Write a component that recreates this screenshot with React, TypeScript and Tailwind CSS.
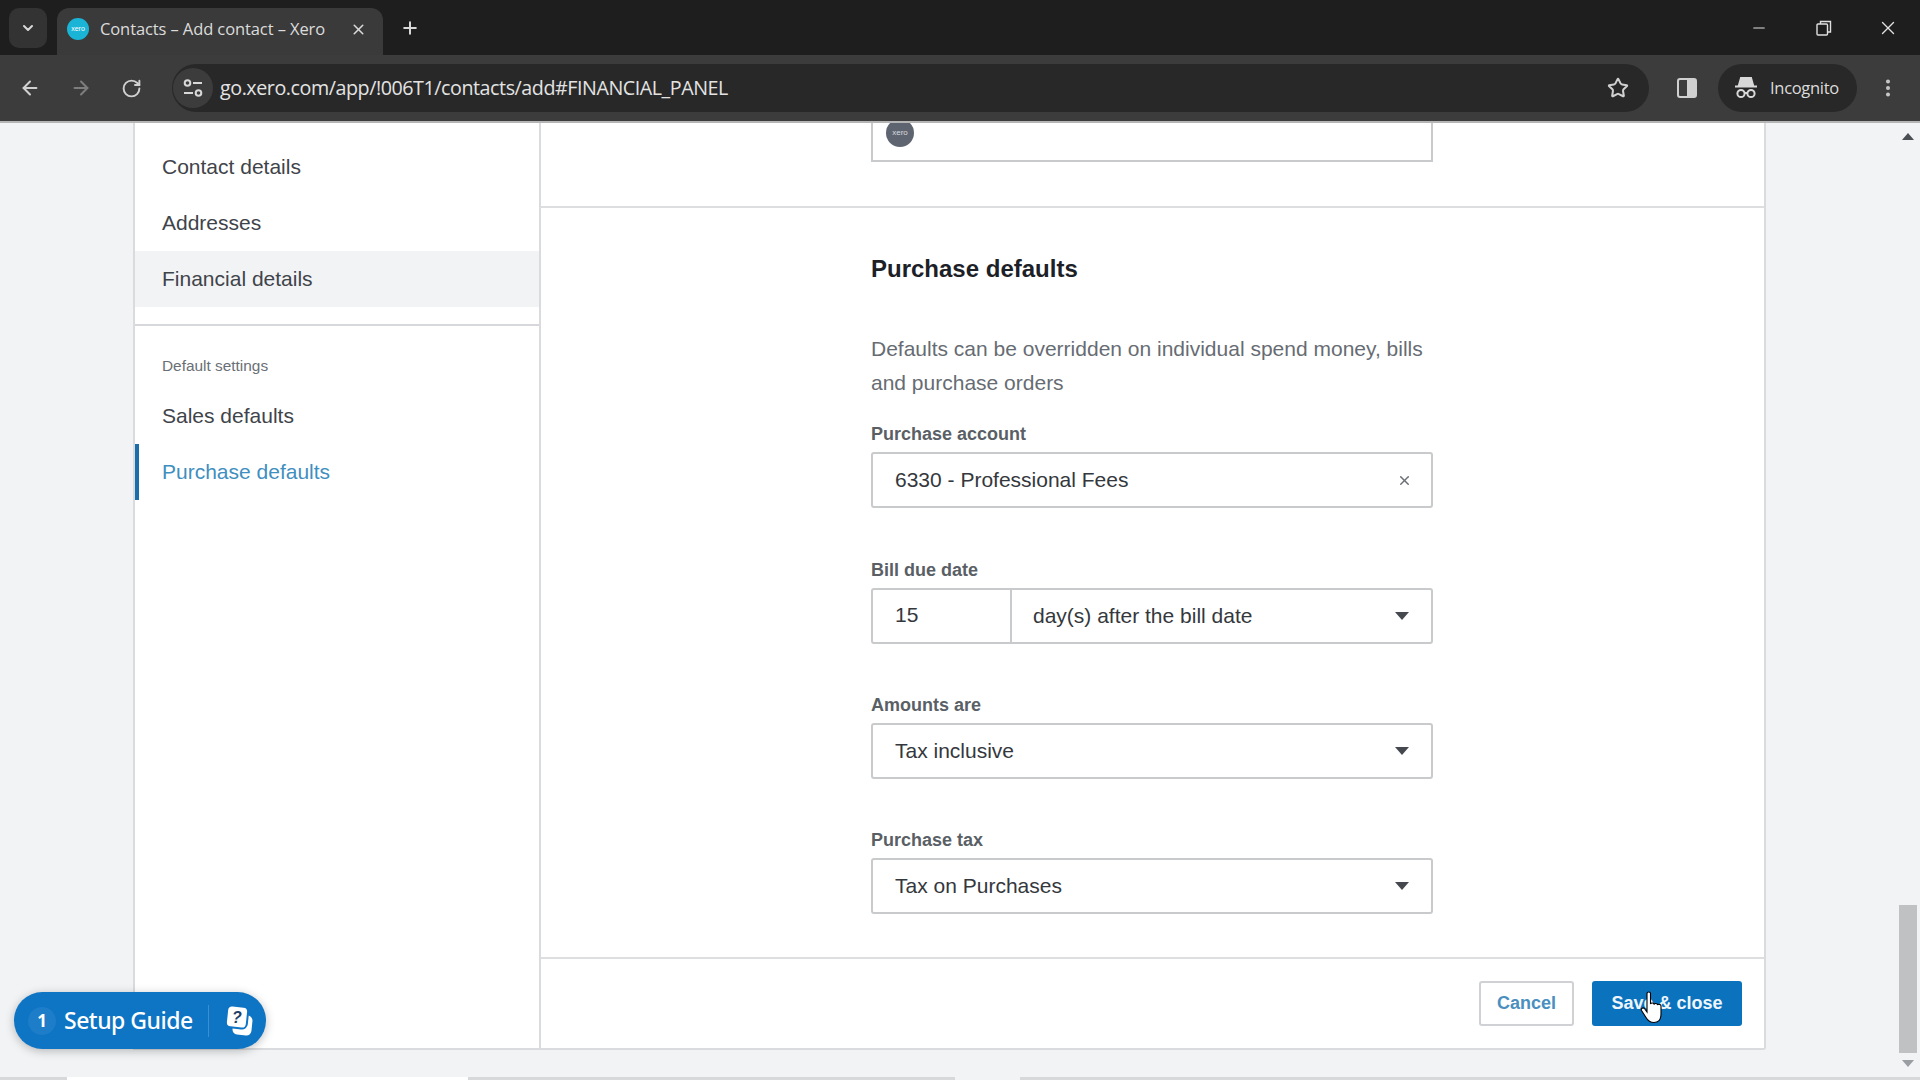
import React from 'react';
import { ArrowLeft, ArrowRight, RotateCw, Star, X, Plus, ChevronDown, Minus, MoreVertical } from 'lucide-react';

const sans = 'font-["Liberation_Sans",Arial,sans-serif]';

const Caret = () => (
  <svg width="14" height="8" viewBox="0 0 14 8" className="shrink-0">
    <path d="M0 0h14L7 8z" fill="#45494f" />
  </svg>
);

const Field: React.FC<{ label: string; value: string; className?: string }> = ({ label, value, className }) => (
  <div className={className}>
    <div className="h-[18px] text-[18px] leading-[18px] font-bold text-[#5a5f66] whitespace-nowrap">{label}</div>
    <div className="mt-[9px] h-[56px] border-2 border-[#c8cacc] rounded-[3px] flex items-center justify-between pl-[22px] pr-[22px] text-[21px] text-[#34383d]">
      <span>{value}</span>
      <Caret />
    </div>
  </div>
);

const TuneIcon = () => (
  <svg width="20" height="18" viewBox="0 0 20 18" fill="none" stroke="#d8d8d8" strokeWidth="2">
    <circle cx="4.500" cy="4" r="2.800" />
    <path d="M10 4h9" />
    <path d="M1 14h9" />
    <circle cx="15.500" cy="14" r="2.800" />
  </svg>
);

const IncognitoIcon = () => (
  <svg width="22" height="24" viewBox="0 0 22 24" fill="none" stroke="#d8d8d8" strokeWidth="2">
    <path d="M6 2h10l2 7H4z" fill="#d8d8d8" />
    <path d="M0 10.500h22" />
    <circle cx="6" cy="17.500" r="3.600" />
    <circle cx="16" cy="17.500" r="3.600" />
    <path d="M9.600 17h2.800" />
  </svg>
);

const HelpIcon = () => (
  <svg width="30" height="32" viewBox="0 0 30 32">
    <rect x="9" y="10" width="19" height="20" rx="5" fill="#fff" transform="rotate(6 18 20)" />
    <rect x="2.500" y="1" width="21" height="22" rx="5" fill="#fff" stroke="#0e74c4" strokeWidth="2" transform="rotate(6 13 12)" />
    <text x="13" y="18" fontSize="16" fontWeight="700" fontStyle="italic" fill="#1f3f66" textAnchor="middle" fontFamily="Liberation Sans">?</text>
  </svg>
);

const Cursor = () => (
  <svg width="26" height="34" viewBox="0 0 26 34">
    <path d="M7 2.500c0-2 3.500-2 3.500 0V13c.5-1.500 3.500-1.500 3.500.5.500-1.500 3.500-1.500 3.500.5.500-1 3.500-1 3.500 1v8c0 5-2 8.500-7 8.500-4 0-6-1.500-8-5l-4.500-7c-1-2 1.500-3.500 3-2L7 21z" fill="#fff" stroke="#000" strokeWidth="1.100" />
  </svg>
);

const App: React.FC = () => {
  return (
    <div className={`w-[1920px] h-[1080px] overflow-hidden relative flex flex-col bg-[#f1f3f4] ${sans}`}>
      {/* browser chrome */}
      <div className="h-[55px] bg-[#1e1e1e] flex items-end pl-[9px] shrink-0">
        <div className="w-[38px] h-[40px] mb-[7px] rounded-[10px] bg-[#333333] flex items-center justify-center">
          <ChevronDown size={16} strokeWidth={3} color="#d8d8d8" />
        </div>
        <div className="ml-[10px] w-[326px] h-[47px] bg-[#3a3a3a] rounded-t-[12px] flex items-center pl-[10px] pb-[5px]">
          <div className="w-[22px] h-[22px] rounded-full bg-[#1ab4d7] flex items-center justify-center text-[7px] text-white">xero</div>
          <span className="ml-[11px] w-[226px] text-[16.5px] text-[#dcdcdc] font-['Open_Sans',sans-serif] tracking-[-0.1px] whitespace-nowrap">Contacts – Add contact – Xero</span>
          <X size={17} strokeWidth={2.2} color="#d8d8d8" className="ml-[24px]" />
        </div>
        <div className="ml-[17px] mb-[17px]">
          <Plus size={20} strokeWidth={2.4} color="#d8d8d8" />
        </div>
        <div className="flex-1" />
        <div className="flex items-center mb-[16px]">
          <Minus size={18} strokeWidth={1.5} color="#e0e0e0" className="mr-[48px]" />
          <svg width="16" height="16" viewBox="0 0 16 16" fill="none" stroke="#e0e0e0" strokeWidth="1.400" className="mr-[45px]">
            <rect x="1" y="4" width="10.500" height="11" rx="1" />
            <path d="M4.500 4V1.500h10v10.500H11.500" />
          </svg>
          <X size={22} strokeWidth={1.5} color="#e0e0e0" className="mr-[21px]" />
        </div>
      </div>
      <div className="h-[68px] bg-[#3c3c3c] border-b-2 border-[#b5b5b5] flex items-center shrink-0">
        <ArrowLeft size={22} strokeWidth={2.2} color="#d0d0d0" className="ml-[19px]" />
        <ArrowRight size={22} strokeWidth={2.2} color="#7d7d7d" className="ml-[29px]" />
        <RotateCw size={21} strokeWidth={2.2} color="#d0d0d0" className="ml-[29px]" />
        <div className="ml-[30px] w-[1477px] h-[48px] rounded-full bg-[#282828] flex items-center">
          <div className="w-[40px] h-[40px] ml-[1px] rounded-full bg-[#3c3c3c] flex items-center justify-center">
            <TuneIcon />
          </div>
          <span className="ml-[7px] text-[19.7px] text-[#e3e3e3] font-['Open_Sans',sans-serif] tracking-[-0.45px]">go.xero.com/app/!006T1/contacts/add#FINANCIAL_PANEL</span>
          <div className="flex-1" />
          <Star size={22} strokeWidth={2.2} color="#d0d0d0" className="mr-[20px]" />
        </div>
        <svg width="20" height="20" viewBox="0 0 20 20" className="ml-[28px]">
          <rect x="1" y="1" width="18" height="18" rx="2" fill="none" stroke="#d0d0d0" strokeWidth="2" />
          <rect x="10" y="1" width="9" height="18" fill="#d0d0d0" />
        </svg>
        <div className="ml-[21px] w-[139px] h-[48px] rounded-full bg-[#282828] flex items-center pl-[17px]">
          <IncognitoIcon />
          <span className="ml-[13px] text-[16.5px] text-[#dcdcdc] font-['Open_Sans',sans-serif] tracking-[-0.3px]">Incognito</span>
        </div>
        <MoreVertical size={22} strokeWidth={2.4} color="#c8c8c8" className="ml-[20px]" />
      </div>

      {/* page */}
      <div className="flex-1 flex min-h-0 pl-[133px] relative">
        <div className="w-[1633px] h-[927px] bg-white border-r-2 border-b-2 border-l-2 border-[#d9dbde] flex shrink-0 rounded-br-[3px]">
          <aside className="w-[406px] border-r-2 border-[#d9dbde] shrink-0">
            <div className="pt-[16px]">
              <div className="h-[56px] flex items-center pl-[27px] text-[21px] text-[#3f444a]">Contact details</div>
              <div className="h-[56px] flex items-center pl-[27px] text-[21px] text-[#3f444a]">Addresses</div>
              <div className="h-[56px] flex items-center pl-[27px] text-[21px] text-[#3f444a] bg-[#f2f3f5]">Financial details</div>
            </div>
            <div className="mt-[17px] border-t-2 border-[#d6d8db] pt-[31px]">
              <div className="pl-[27px] h-[18px] leading-[18px] text-[15.4px] text-[#6a6f75]">Default settings</div>
              <div className="mt-[13px] h-[56px] flex items-center pl-[27px] text-[21px] text-[#3f444a]">Sales defaults</div>
              <div className="h-[56px] flex items-center pl-[23px] border-l-4 border-[#1a6fa8] text-[21px] text-[#3f8fc0]">Purchase defaults</div>
            </div>
          </aside>
          <main className="flex-1 flex flex-col min-w-0">
            <div className="h-[85px] border-b-2 border-[#dcdee0] pl-[330px] shrink-0">
              <div className="w-[562px] h-[39px] border-x-2 border-b-2 border-[#c8cacc] pl-[13px] flex items-start overflow-hidden">
                <div className="w-[28px] h-[28px] -mt-[4px] rounded-full bg-[#5f6570] flex items-center justify-center text-[8px] text-[#d8dade]">xero</div>
              </div>
            </div>
            <div className="flex-1 pl-[330px]">
              <div className="w-[562px]">
                <h2 className="pt-[49px] h-[73px] leading-[24px] text-[24px] font-bold text-[#1c2127]">Purchase defaults</h2>
                <p className="mt-[51px] text-[21px] leading-[34px] text-[#676c73] whitespace-nowrap">
                  Defaults can be overridden on individual spend money, bills<br />and purchase orders
                </p>
                <div className="mt-[25px] h-[18px] text-[18px] leading-[18px] font-bold text-[#5a5f66] whitespace-nowrap">Purchase account</div>
                <div className="mt-[9px] h-[56px] border-2 border-[#c8cacc] rounded-[3px] flex items-center justify-between pl-[22px] pr-[19px] text-[21px] text-[#34383d]">
                  <span>6330 - Professional Fees</span>
                  <X size={15} strokeWidth={2.4} color="#6a6f75" />
                </div>
                <div className="mt-[53px] h-[18px] text-[18px] leading-[18px] font-bold text-[#5a5f66] whitespace-nowrap">Bill due date</div>
                <div className="mt-[9px] h-[56px] border-2 border-[#c8cacc] rounded-[3px] flex items-center text-[21px] text-[#34383d]">
                  <div className="w-[139px] h-full border-r-2 border-[#c8cacc] pl-[22px] flex items-center pb-[2px]">15</div>
                  <div className="flex-1 flex items-center justify-between pl-[21px] pr-[22px]">
                    <span>day(s) after the bill date</span>
                    <Caret />
                  </div>
                </div>
                <Field className="mt-[52px]" label="Amounts are" value="Tax inclusive" />
                <Field className="mt-[52px]" label="Purchase tax" value="Tax on Purchases" />
              </div>
            </div>
            <div className="h-[91px] border-t-2 border-[#dcdee0] flex items-center justify-end gap-[18px] pr-[22px] shrink-0">
              <button className="w-[95px] h-[45px] border-2 border-[#cfd1d4] rounded-[3px] text-[18px] font-bold text-[#4a8fc0]">Cancel</button>
              <button className="w-[150px] h-[45px] rounded-[3px] bg-[#0b72bd] text-[18px] font-bold text-[#eef6fb]">Save &amp; close</button>
            </div>
          </main>
        </div>
        {/* scrollbar */}
        <div className="ml-auto w-[24px] flex flex-col items-center shrink-0 pt-[10px] pr-[1px]">
          <div className="w-0 h-0 border-x-[6px] border-x-transparent border-b-[7px] border-b-[#4b4f54]" />
          <div className="mt-[765px] w-[18px] h-[148px] bg-[#bfc1c3]" />
          <div className="mt-[7px] w-0 h-0 border-x-[6px] border-x-transparent border-t-[7px] border-t-[#9a9da1]" />
        </div>
        {/* setup guide, floats over the page */}
        <div className="absolute left-[14px] top-[869px] w-[252px] h-[57px] rounded-full bg-[#0e74c4] shadow-[0_2px_10px_rgba(0,0,0,0.25)] flex items-center pl-[14px] text-white">
          <div className="w-[28px] h-[28px] rounded-full bg-[#1d7dc9] flex items-center justify-center text-[17px] font-bold font-['Noto_Sans',sans-serif]">1</div>
          <span className="ml-[8px] w-[129px] text-[23px] font-medium font-['Noto_Sans',sans-serif] tracking-[-0.5px] whitespace-nowrap">Setup Guide</span>
          <div className="ml-[15px] w-px h-[32px] bg-[#3b8fd0]" />
          <div className="ml-[15px]"><HelpIcon /></div>
        </div>
        {/* mouse pointer */}
        <div className="absolute left-[1640px] top-[868px]"><Cursor /></div>
      </div>
      {/* thin strip along the bottom edge */}
      <div className="h-[3px] flex shrink-0 bg-[#d6d8d9]">
        <div className="ml-[67px] w-[401px] bg-white" />
        <div className="ml-[487px] w-[65px] bg-[#f1f3f4]" />
      </div>
    </div>
  );
};

export default App;
